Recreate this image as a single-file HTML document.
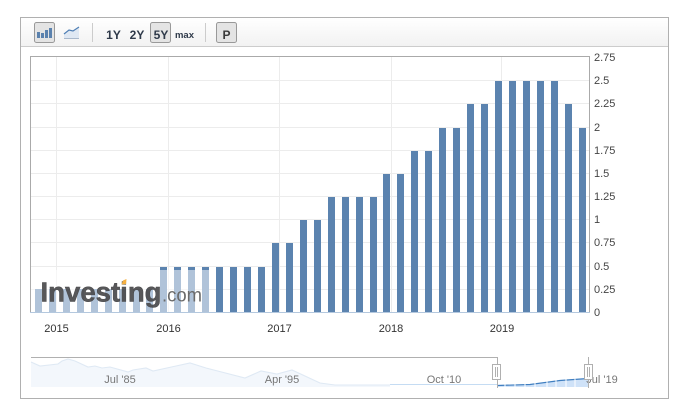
<!DOCTYPE html>
<html><head><meta charset="utf-8"><style>
html,body{margin:0;padding:0;background:#fff;width:681px;height:408px;overflow:hidden}
svg{display:block;font-family:"Liberation Sans",Arial,sans-serif}
</style></head><body>
<svg width="681" height="408" viewBox="0 0 681 408" xmlns="http://www.w3.org/2000/svg">
<defs><linearGradient id="tb" x1="0" y1="0" x2="0" y2="1"><stop offset="0" stop-color="#fff"/><stop offset="1" stop-color="#f2f2f2"/></linearGradient></defs>
<rect x="20.5" y="17.5" width="648" height="381" fill="#fff" stroke="#b0b0b0"/>
<rect x="21" y="18" width="647" height="28" fill="url(#tb)"/>
<line x1="21" y1="46.5" x2="668" y2="46.5" stroke="#ccc"/>
<!-- toolbar -->
<rect x="34.5" y="22.5" width="20" height="20" rx="2" fill="#e4e4e4" stroke="#999"/>
<g fill="#5b82ae"><rect x="37" y="32" width="3" height="6"/><rect x="41" y="33" width="3" height="5"/><rect x="45" y="30" width="3" height="8"/><rect x="49" y="28" width="3" height="10"/></g>
<path d="M64 34L69 30L73 31L79 27V38H64Z" fill="#dfe8f3"/>
<path d="M64 34L69 30L73 31L79 27" fill="none" stroke="#4f7fb5" stroke-width="1.2"/>
<line x1="64" y1="38.5" x2="79" y2="38.5" stroke="#a8b8cc"/>
<line x1="92.5" y1="23" x2="92.5" y2="42" stroke="#ccc"/>
<rect x="150.5" y="22.5" width="20" height="20" rx="2" fill="#e4e4e4" stroke="#999"/>
<g font-weight="bold" font-size="12" fill="#2f3a4a" text-anchor="middle">
<text x="113.5" y="39">1Y</text><text x="137" y="39">2Y</text><text x="161" y="39">5Y</text>
<text x="184.5" y="38" font-size="9.5">max</text>
</g>
<line x1="205.5" y1="23" x2="205.5" y2="42" stroke="#ccc"/>
<rect x="216.5" y="22.5" width="20" height="20" rx="2" fill="#e4e4e4" stroke="#999"/>
<text x="226.5" y="39" font-weight="bold" font-size="12" fill="#3a3a3a" text-anchor="middle">P</text>
<!-- grid -->
<g stroke="#ececec" fill="none">
<path d="M31 80.5H589M31 103.5H589M31 127.5H589M31 150.5H589M31 173.5H589M31 196.5H589M31 219.5H589M31 242.5H589M31 266.5H589M31 289.5H589"/>
<path d="M56.5 57V312M168.5 57V312M279.5 57V312M391.5 57V312M501.5 57V312"/>
</g>
<!-- bars -->
<g fill="#5b83af">
<rect x="35" y="289" width="7" height="23"/><rect x="49" y="289" width="7" height="23"/><rect x="63" y="289" width="7" height="23"/><rect x="77" y="289" width="7" height="23"/><rect x="91" y="289" width="7" height="23"/><rect x="105" y="289" width="7" height="23"/><rect x="119" y="289" width="7" height="23"/><rect x="133" y="289" width="7" height="23"/><rect x="146" y="289" width="7" height="23"/>
<rect x="160" y="267" width="7" height="45"/><rect x="174" y="267" width="7" height="45"/><rect x="188" y="267" width="7" height="45"/><rect x="202" y="267" width="7" height="45"/><rect x="216" y="267" width="7" height="45"/><rect x="230" y="267" width="7" height="45"/><rect x="244" y="267" width="7" height="45"/><rect x="258" y="267" width="7" height="45"/>
<rect x="272" y="243" width="7" height="69"/><rect x="286" y="243" width="7" height="69"/>
<rect x="300" y="220" width="7" height="92"/><rect x="314" y="220" width="7" height="92"/>
<rect x="328" y="197" width="7" height="115"/><rect x="342" y="197" width="7" height="115"/><rect x="356" y="197" width="7" height="115"/><rect x="370" y="197" width="7" height="115"/>
<rect x="383" y="174" width="7" height="138"/><rect x="397" y="174" width="7" height="138"/>
<rect x="411" y="151" width="7" height="161"/><rect x="425" y="151" width="7" height="161"/>
<rect x="439" y="128" width="7" height="184"/><rect x="453" y="128" width="7" height="184"/>
<rect x="467" y="104" width="7" height="208"/><rect x="481" y="104" width="7" height="208"/>
<rect x="495" y="81" width="7" height="231"/><rect x="509" y="81" width="7" height="231"/><rect x="523" y="81" width="7" height="231"/><rect x="537" y="81" width="7" height="231"/><rect x="551" y="81" width="7" height="231"/>
<rect x="565" y="104" width="7" height="208"/><rect x="579" y="128" width="7" height="184"/>
</g>
<!-- watermark -->
<rect x="31" y="270" width="178" height="42" fill="#fff" fill-opacity=".52"/>
<text x="40.5" y="301.5" font-size="28" font-weight="bold" fill="#4a4a4c" fill-opacity=".92" stroke="#4a4a4c" stroke-width=".5" textLength="121" lengthAdjust="spacingAndGlyphs">Investing</text>
<path d="M121.500 284.500L123 280.500L126.500 279L126 284Z" fill="#f5b041"/>
<text x="162" y="301.500" font-size="19" fill="#6a6a6a" textLength="40" lengthAdjust="spacingAndGlyphs">.com</text>
<!-- plot frame -->
<path d="M30.5 312V56.5H589.5V312" fill="none" stroke="#aaa"/>
<line x1="30" y1="312.5" x2="590" y2="312.5" stroke="#b4c8de"/>
<!-- y labels -->
<g font-size="11" fill="#444">
<text x="594" y="61">2.75</text><text x="594" y="84">2.5</text><text x="594" y="107">2.25</text><text x="594" y="131">2</text><text x="594" y="154">1.75</text><text x="594" y="177">1.5</text><text x="594" y="200">1.25</text><text x="594" y="223">1</text><text x="594" y="246">0.75</text><text x="594" y="270">0.5</text><text x="594" y="293">0.25</text><text x="594" y="316">0</text>
</g>
<!-- x labels -->
<g font-size="11" fill="#333" text-anchor="middle">
<text x="56.5" y="332">2015</text><text x="168.5" y="332">2016</text><text x="279.5" y="332">2017</text><text x="391" y="332">2018</text><text x="502" y="332">2019</text>
</g>
<!-- navigator -->
<path d="M31 362L40 366L58 364L62 361L68 359L75 361L88 367L95 366L102 368L110 367L128 372L133 370L146 368L153 371L176 366L190 363L206 368L245 378L261 371L277 374L292 370L320 383L335 385L390 385V387H31Z" fill="#f3f7fc"/>
<path d="M31 362L40 366L58 364L62 361L68 359L75 361L88 367L95 366L102 368L110 367L128 372L133 370L146 368L153 371L176 366L190 363L206 368L245 378L261 371L277 374L292 370L320 383L335 385L390 385" fill="none" stroke="#dfe9f4" stroke-width="1.1"/>
<path d="M390 384.500H497" stroke="#c5dcf3" stroke-width="1" fill="none"/>
<path d="M497 386L530 385L560 381L588 379V387H497Z" fill="#cfe2f8"/>
<path d="M497 385.500L530 384.500L560 380.500L588 378.500" fill="none" stroke="#3f7ec0" stroke-width="1.2"/>
<g stroke="#fff" stroke-width="1"><path d="M505 380V388M515 380V388M525 380V388M535 380V388M547 378V388M556 378V388M566 378V388M575 378V388"/></g>
<g font-size="11" fill="#777" text-anchor="middle">
<text x="120" y="383">Jul '85</text><text x="282" y="383">Apr '95</text><text x="444" y="383">Oct '10</text><text x="602" y="383">Jul '19</text>
</g>
<path d="M31 357.500H497.500V365M497.500 379V388" fill="none" stroke="#b0b0b0"/>
<path d="M588.500 357V365M588.500 379V388" fill="none" stroke="#b0b0b0"/>
<g fill="#fff" stroke="#b0b0b0">
<rect x="492.500" y="364.500" width="8" height="15"/><rect x="584.500" y="364.500" width="8" height="15"/>
</g>
<path d="M495.500 367V377M497.500 367V377M587.500 367V377M589.500 367V377" stroke="#b0b0b0" fill="none"/>
</svg>
</body></html>
